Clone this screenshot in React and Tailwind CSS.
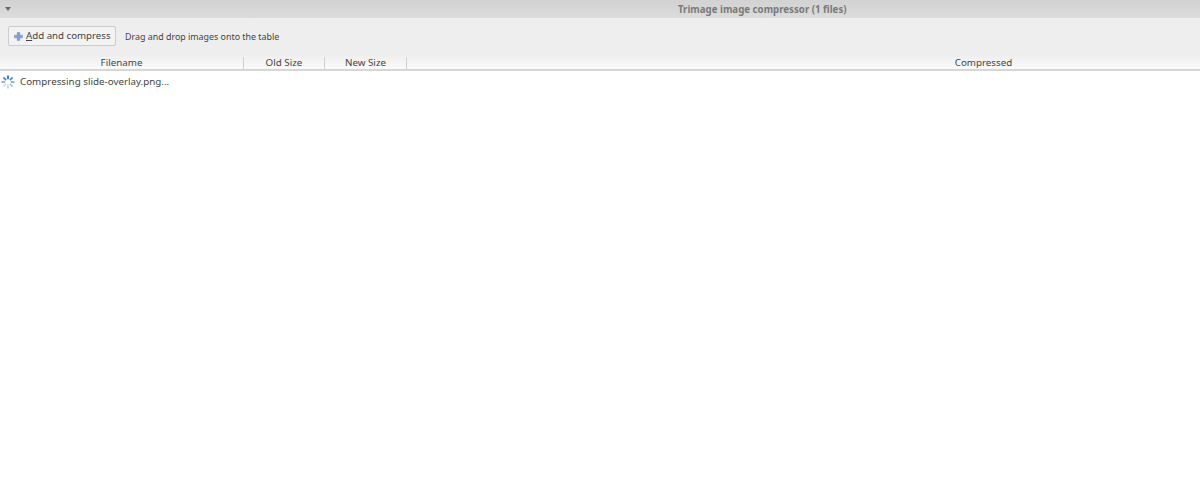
const FONT = { fontFamily: '"Noto Sans", sans-serif' };

function PlusIcon() {
  return (
    <svg width="9" height="9" viewBox="0 0 10 10">
      <path d="M3.5 0.5h3v3h3v3h-3v3h-3v-3h-3v-3h3z" fill="#7f9fd0" stroke="#6d8fc4" strokeWidth="0.5" />
    </svg>
  );
}

function Spinner() {
  const spokes = [
    ["#2f74cc", 0], ["#4d8ad6", 45], ["#79a8e2", 90], ["#a3c3ea", 135],
    ["#c3d6ee", 180], ["#d0dcea", 225], ["#8fa8c4", 270], ["#4f83c4", 315],
  ];
  return (
    <svg width="14" height="14" viewBox="0 0 14 14">
      {spokes.map(([color, angle]) => (
        <line key={angle} x1="7" y1="0.6" x2="7" y2="4.2" stroke={color} strokeWidth="1.8" transform={`rotate(${angle} 7 7)`} />
      ))}
    </svg>
  );
}

export default function App() {
  return (
    <div className="h-[480px] w-[1200px] overflow-hidden bg-white text-[#444444]" style={FONT}>
      {/* Title bar */}
      <div className="flex h-[18px] items-center bg-gradient-to-b from-[#d2d2d2] to-[#dcdcdc]">
        <span className="ml-[5px] h-0 w-0 border-x-[3.5px] border-t-[4px] border-x-transparent border-t-[#6b6b6b]" />
        <span className="mt-[2px] ml-[667px] text-[9.7px] font-bold whitespace-nowrap text-[#7a7a7a]">Trimage image compressor (1 files)</span>
      </div>

      {/* Toolbar */}
      <div className="flex h-[36px] items-center bg-[#eeeeee] pl-2">
        <button className="flex h-[20px] w-[108px] items-center rounded-[2px] border border-[#cccccc] bg-[#f3f3f3] pl-[5px] text-[9.7px] whitespace-nowrap text-[#444444]">
          <PlusIcon />
          <span className="mt-[1px] ml-[3px]"><span className="underline">A</span>dd and compress</span>
        </button>
        <span className="mt-[1px] ml-[9px] text-[8.9px] whitespace-nowrap">Drag and drop images onto the table</span>
      </div>

      {/* Table header */}
      <div className="flex h-[17px] overflow-hidden border-b-2 border-[#d6d6d6] bg-gradient-to-b from-[#eeeeee] to-[#fafafa] pt-[3px] text-[9.8px]">
        <div className="flex w-[244px] shrink-0 items-center justify-center border-r border-[#cfcfcf]">Filename</div>
        <div className="flex w-[81px] shrink-0 items-center justify-center border-r border-[#cfcfcf]">Old Size</div>
        <div className="flex w-[82px] shrink-0 items-center justify-center border-r border-[#cfcfcf]">New Size</div>
        <div className="flex w-[1153px] shrink-0 items-center justify-center">Compressed</div>
      </div>

      {/* Rows */}
      <div className="flex h-[20px] items-center pt-[2px] pl-[1px] text-[9.8px]">
        <Spinner />
        <span className="ml-[5px]">Compressing slide-overlay.png...</span>
      </div>
    </div>
  );
}
